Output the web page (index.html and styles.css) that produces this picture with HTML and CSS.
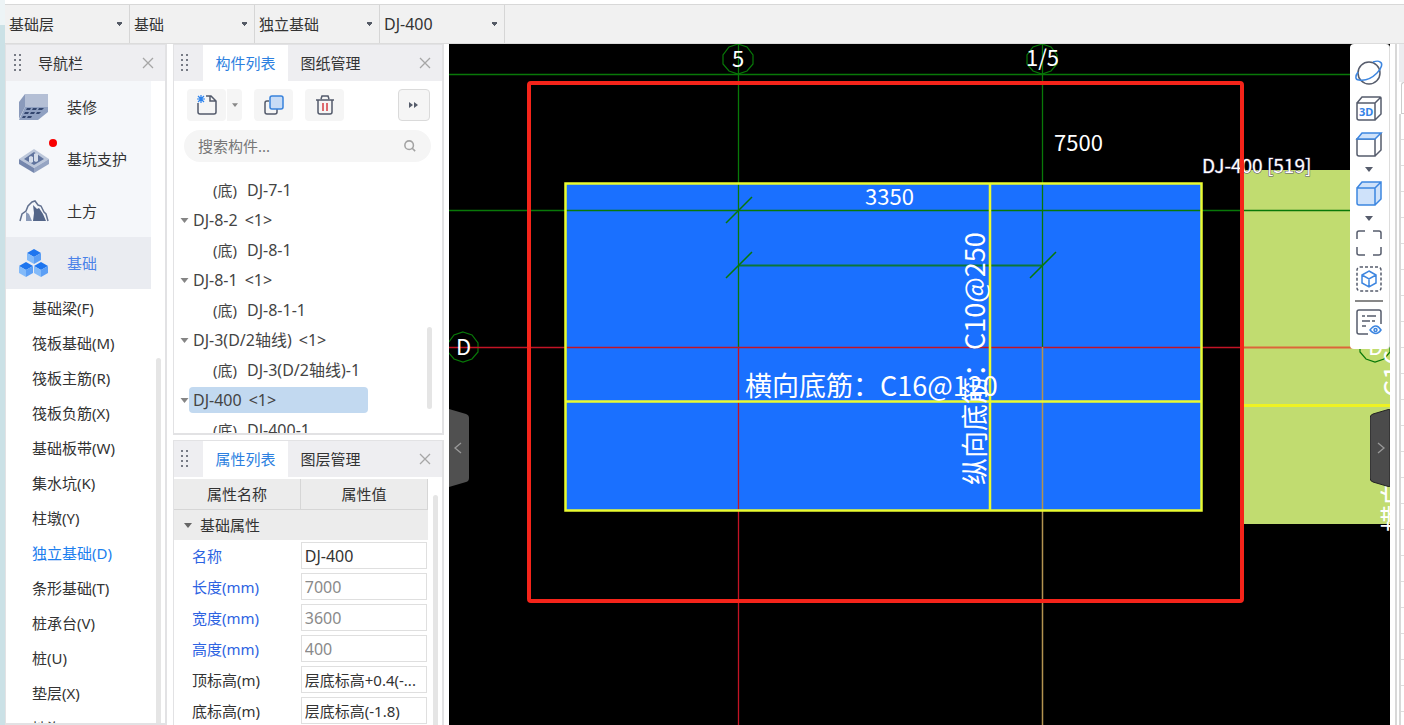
FILE: index.html
```html
<!DOCTYPE html>
<html lang="zh-CN">
<head>
<meta charset="utf-8">
<title>独立基础</title>
<link rel="stylesheet" href="styles.css">
</head>
<body>
<svg class="defs" aria-hidden="true">
  <symbol id="grip" viewBox="0 0 9 18"><path d="M0 0h2v2H0zM5 0h2v2H5zM0 5h2v2H0zM5 5h2v2H5zM0 10h2v2H0zM5 10h2v2H5zM0 15h2v2H0zM5 15h2v2H5z" fill="#777b85"/></symbol>
  <symbol id="close" viewBox="0 0 12 12"><path d="M1 1l10 10M11 1L1 11" stroke="#a6a6a6" stroke-width="1.3"/></symbol>
  <symbol id="down" viewBox="0 0 8 5"><path d="M0 0h8L4 5z" fill="currentColor"/></symbol>
</svg>
<div class="desktop"></div>
<div class="app">
  <header class="context">
    <select aria-label="楼层"><option>基础层</option></select>
    <select aria-label="构件类别"><option>基础</option></select>
    <select aria-label="构件类型"><option>独立基础</option></select>
    <select aria-label="构件" class="latin"><option>DJ-400</option></select>
  </header>
  <div class="work">
    <nav class="panel nav">
      <div class="head">
        <svg class="grip"><use href="#grip"/></svg><span class="title">导航栏</span>
        <button class="close" aria-label="关闭导航栏"><svg><use href="#close"/></svg></button>
      </div>
      <ul class="groups">
        <li><a href="#"><svg class="gicon" viewBox="0 0 30 28"><path d="M6 1h23v14H6z" fill="#b4bfd5"/><path d="M6 1v13L0 26V9z" fill="#8a9abb"/><path d="M6 14h23v5L19 27H0z" fill="#8fa0c1"/><path d="M8 15h4l-1 2H7zM14 15h4l-1 2h-4zM20 15h5l-2 2h-4zM6 19h4l-1 2H5zM12 19h4l-1 2h-4zM18 19h4l-2 2h-3zM4 23h3l-1 2H3zM9 23h4l-1 2H8z" fill="#33466f"/></svg>装修</a></li>
        <li><a href="#"><svg class="gicon" viewBox="0 0 30 28"><path d="M0 14L15 4l15 10-15 9z" fill="#bcc7da"/><path d="M0 14l15 9v5L0 19z" fill="#7587ad"/><path d="M30 14l-15 9v5l15-9z" fill="#96a5c3"/><path d="M5 14l10-7 10 7-10 6z" fill="#60749e"/><path d="M10 12l2-1 2 1v5l-2 1-2-1zM15 9l2-1 2 1v7l-2 1-2-1z" fill="#d4dce9"/></svg>基坑支护<i class="dot"></i></a></li>
        <li><a href="#"><svg class="gicon" viewBox="0 0 30 28"><path d="M1 24l2-7 4-3 2-5 4-4 3-1 3 4 3 1 3 6 2 2 2 7" fill="none" stroke="#62718f" stroke-width="1.5"/><path d="M14 8l4 4 2-1 4 6 3 7H14l1-8z" fill="#536588"/><path d="M7 15l3 2 3 7H7z" fill="#8a9ab8"/></svg>土方</a></li>
        <li class="active"><a href="#"><svg class="gicon" viewBox="0 0 30 28"><g id="cube"><path d="M15 0l7 4-7 4-7-4z" fill="#1e75ef"/><path d="M8 4l7 4v7l-7-4z" fill="#83baf9"/><path d="M22 4l-7 4v7l7-4z" fill="#5c9ff5"/></g><use href="#cube" x="-8" y="13"/><use href="#cube" x="7" y="13"/></svg>基础</a></li>
      </ul>
      <ul class="types">
        <li><a href="#">基础梁(F)</a></li><li><a href="#">筏板基础(M)</a></li><li><a href="#">筏板主筋(R)</a></li><li><a href="#">筏板负筋(X)</a></li><li><a href="#">基础板带(W)</a></li><li><a href="#">集水坑(K)</a></li><li><a href="#">柱墩(Y)</a></li><li class="active"><a href="#">独立基础(D)</a></li><li><a href="#">条形基础(T)</a></li><li><a href="#">桩承台(V)</a></li><li><a href="#">桩(U)</a></li><li><a href="#">垫层(X)</a></li><li><a href="#">地沟(G)</a></li>
      </ul>
      <i class="scroll nav-scroll"></i>
    </nav>
    <div class="side">
      <section class="panel list">
        <div class="head">
          <svg class="grip"><use href="#grip"/></svg>
          <button class="tab active">构件列表</button><button class="tab">图纸管理</button>
          <button class="close" aria-label="关闭构件列表"><svg><use href="#close"/></svg></button>
        </div>
        <div class="tools">
          <div class="split">
            <button class="tool" aria-label="新建"><svg width="22" height="22" viewBox="0 0 22 22" fill="none" stroke="#535a6b" stroke-width="1.5"><path d="M2 9v9q0 2 2 2h14q2 0 2-2V7l-5-5h-5M14 2v5h6"/><path d="M2 2l6 6M8 2L2 8M5 1v8M1 5h8" stroke="#2c83ee" stroke-width="1.2"/></svg></button>
            <button class="more" aria-label="新建选项"><svg class="caret"><use href="#down"/></svg></button>
          </div>
          <button class="tool" aria-label="复制"><svg width="22" height="22" viewBox="0 0 22 22" fill="none" stroke-width="1.5"><path d="M6 7H4Q2 7 2 9v9q0 2 2 2h8q2 0 2-2v-3" stroke="#535a6b"/><rect x="7" y="2" width="13" height="13" rx="2" fill="#c8dcf6" stroke="#3882dc"/></svg></button>
          <button class="tool" aria-label="删除"><svg width="22" height="22" viewBox="0 0 22 22" fill="none" stroke="#535a6b" stroke-width="1.5"><path d="M2 6h18M7 5l1-3h6l1 3M4 6v12q0 2 2 2h10q2 0 2-2V6"/><path d="M9 9v8M13 9v8" stroke="#d53d42"/></svg></button>
          <button class="expand" aria-label="更多工具"><svg width="10" height="8" viewBox="0 0 10 8"><path d="M0 1l4 3-4 3zM5 1l4 3-4 3z" fill="#555c6a"/></svg></button>
        </div>
        <div class="search">
          <input type="text" aria-label="搜索构件" placeholder="搜索构件...">
          <svg width="12" height="12" viewBox="0 0 14 14" fill="none" stroke="#a3a3a3" stroke-width="1.8"><circle cx="6" cy="6" r="5"/><path d="M9 9l4 4"/></svg>
        </div>
        <ul class="tree">
          <li class="leaf"><span>(底)</span>DJ-7-1</li>
          <li><svg class="caret"><use href="#down"/></svg><b>DJ-8-2</b><i>&lt;1&gt;</i></li>
          <li class="leaf"><span>(底)</span>DJ-8-1</li>
          <li><svg class="caret"><use href="#down"/></svg><b>DJ-8-1</b><i>&lt;1&gt;</i></li>
          <li class="leaf"><span>(底)</span>DJ-8-1-1</li>
          <li><svg class="caret"><use href="#down"/></svg><b>DJ-3(D/2轴线)</b><i>&lt;1&gt;</i></li>
          <li class="leaf"><span>(底)</span>DJ-3(D/2轴线)-1</li>
          <li><svg class="caret"><use href="#down"/></svg><div class="picked"><b>DJ-400</b><i>&lt;1&gt;</i></div></li>
          <li class="leaf"><span>(底)</span>DJ-400-1</li>
        </ul>
        <i class="scroll list-scroll"></i>
      </section>
      <section class="panel props">
        <div class="head">
          <svg class="grip"><use href="#grip"/></svg>
          <button class="tab active">属性列表</button><button class="tab">图层管理</button>
          <button class="close" aria-label="关闭属性列表"><svg><use href="#close"/></svg></button>
        </div>
        <table>
          <thead><tr><th>属性名称</th><th>属性值</th></tr></thead>
          <tbody>
            <tr class="group"><td colspan="2"><svg class="caret"><use href="#down"/></svg>基础属性</td></tr>
            <tr class="key"><td><label for="p1">名称</label></td><td><input id="p1" class="latin" value="DJ-400"></td></tr>
            <tr class="key dim"><td><label for="p2">长度(mm)</label></td><td><input id="p2" class="latin" value="7000"></td></tr>
            <tr class="key dim"><td><label for="p3">宽度(mm)</label></td><td><input id="p3" class="latin" value="3600"></td></tr>
            <tr class="key dim"><td><label for="p4">高度(mm)</label></td><td><input id="p4" class="latin" value="400"></td></tr>
            <tr><td><label for="p5">顶标高(m)</label></td><td><input id="p5" value="层底标高+0.4(-..."></td></tr>
            <tr><td><label for="p6">底标高(m)</label></td><td><input id="p6" value="层底标高(-1.8)"></td></tr>
          </tbody>
        </table>
        <i class="scroll props-scroll"></i>
      </section>
    </div>
    <main class="canvas">
      <svg class="drawing" viewBox="0 0 941 681" preserveAspectRatio="xMinYMin slice">
        <rect x="795" y="126" width="146" height="354" fill="#c1dc70"/>
        <rect x="117" y="140" width="636" height="326" fill="#1a70ff"/>
        <g fill="none" stroke="#087808">
          <path d="M0 30.500h941M0 166.500h941M289.500 0v303M593.500 0v303" stroke-width="1.3"/>
          <path d="M289 221.500h305" stroke-width="2" stroke-opacity=".8"/>
          <path d="M277 179l26-26M277 234l26-26M581 234l26-26" stroke-width="1.500"/>
          <path id="bubble" d="M289 0l9 3 6 8v9l-6 7-9 3-9-3-6-7v-9l6-8z" stroke-width="1.200"/>
          <use href="#bubble" x="304"/><use href="#bubble" x="-275" y="288"/><use href="#bubble" x="637" y="288"/>
        </g>
        <path d="M0 303.500h795" stroke="#c31425" stroke-width="1.500"/>
        <path d="M289.500 303v378" stroke="#c31425" stroke-width="1.300"/>
        <path d="M795 303.500h132" stroke="#e2482c" stroke-width="2" stroke-opacity=".8"/>
        <path d="M593.500 303v378" stroke="#b29350" stroke-width="1.500"/>
        <g fill="none" stroke="#eafb30" stroke-width="2.500"><rect x="116.500" y="139.500" width="636" height="327"/><path d="M541 140v326M117 357.500h636"/></g>
        <path d="M795 361.500h146" stroke="#eef222" stroke-width="3"/>
        <g class="t22">
          <text x="283" y="23">5</text><text x="577" y="22">1/5</text><text x="605" y="107">7500</text><text x="416" y="161">3350</text><text x="7" y="311">D</text><text x="919" y="311">D</text>
        </g>
        <text class="t19" x="753" y="129">DJ-400 [519]</text>
        <g class="t27">
          <text x="296" y="352">横向底筋：C16@120</text>
          <text transform="translate(536 441) rotate(-90)">纵向底筋：C10@250</text>
          <text transform="translate(955 488) rotate(-90)">横向底筋：C16@120</text>
        </g>
        <rect x="80" y="39" width="713" height="518" rx="2" fill="none" stroke="#f5241a" stroke-width="4"/>
      </svg>
      <button class="flap left" aria-label="收起左侧"><svg width="20" height="78" viewBox="0 0 20 78"><path d="M0 0l17 5q3 1 3 4v60q0 3-3 4L0 78z" fill="#505050"/><path d="M12 34l-6 5 6 5" fill="none" stroke="#9a9a9a" stroke-width="1.300"/></svg></button>
      <button class="flap right" aria-label="展开右侧"><svg width="20" height="78" viewBox="0 0 20 78"><path d="M20 0L3 5Q0 6 0 9v60q0 3 3 4l17 5z" fill="#4b4b4b" stroke="#222"/><path d="M8 34l6 5-6 5" fill="none" stroke="#9a9a9a" stroke-width="1.300"/></svg></button>
      <div class="views">
        <button aria-label="动态观察"><svg viewBox="0 0 28 28"><circle cx="14" cy="14" r="11"/><path class="b" d="M3 13c-3 4-3 8 1 8 6 1 13-2 18-7 5-5 6-10 3-11-1-1-4-1-7 0"/></svg></button>
        <button aria-label="三维"><svg viewBox="0 0 28 28"><path d="M2 8h18v17H4q-2 0-2-2zM2 8l5-6h18q1 0 1 1v16l-6 6M20 8l6-6"/><text x="4" y="21">3D</text></svg></button>
        <button aria-label="俯视"><svg viewBox="0 0 28 28"><path d="M2 8h18v17H4q-2 0-2-2zM26 2v17l-6 6"/><path class="b f" d="M2 8l5-6h19l-6 6z"/></svg></button>
        <button class="arrow" aria-label="更多视图"><svg class="caret"><use href="#down"/></svg></button>
        <button aria-label="实体显示"><svg viewBox="0 0 28 28"><path class="b f" d="M2 8h18v17H4q-2 0-2-2zM2 8l5-6h19v17l-6 6M20 8l6-6"/></svg></button>
        <button class="arrow" aria-label="更多显示方式"><svg class="caret"><use href="#down"/></svg></button>
        <button aria-label="全屏"><svg viewBox="0 0 28 28"><path d="M2 10V4q0-2 2-2h6M18 2h6q2 0 2 2v6M26 18v6q0 2-2 2h-6M10 26H4q-2 0-2-2v-6"/></svg></button>
        <button aria-label="局部三维"><svg viewBox="0 0 28 28"><rect x="2" y="2" width="24" height="24" rx="3" stroke-dasharray="3 2"/><path class="b" d="M14 6l7 4v8l-7 4-7-4v-8zM7 10l7 4 7-4M14 14v8"/></svg></button>
        <hr>
        <button aria-label="显示设置"><svg viewBox="0 0 28 28"><path d="M13 26H4q-2 0-2-2V4q0-2 2-2h20q2 0 2 2v12M7 8h3M12 8h9M7 13h8M17 13h3M7 18h4"/><path class="b" d="M15 22q6-8 11 0-5 7-11 0z"/><circle class="b" cx="20.500" cy="22" r="1.500"/></svg></button>
      </div>
    </main>
    <aside class="edge"><i class="edge-head"></i><i class="edge-tab"></i><i class="edge-rows"></i></aside>
  </div>
</div>
</body>
</html>
```
FILE: styles.css
```css
* { box-sizing: border-box; }
body { margin: 0; height: 100vh; display: flex; overflow: hidden; background: #fff; color: #333; font: 15px/20px "Noto Sans", "Noto Sans CJK SC", sans-serif; }
button, select, input { font: inherit; color: inherit; }
button { border: 0; padding: 0; background: none; display: flex; align-items: center; justify-content: center; }
ul { list-style: none; margin: 0; padding: 0; }
a { color: inherit; text-decoration: none; }
.defs { position: absolute; width: 0; height: 0; }
.desktop { width: 5px; flex: none; background: linear-gradient(#edf4f6 25px, #cbe1e6 25px); }
.app { flex: 1; min-width: 0; display: flex; flex-direction: column; padding-top: 4px; }
.context { height: 40px; flex: none; display: flex; background: #f1f1f1; border-top: 1px solid #d8d8d8; border-bottom: 1px solid #dcdcdc; }
.context select { appearance: none; width: 125px; border: 0; border-right: 1px solid #d6d6d6; border-radius: 0; padding: 0 4px; background: conic-gradient(from -39deg at 50% 100%, #555b66 78deg, transparent 0) right 6px center / 7px 4px no-repeat; }
.context .latin, input.latin { font-size: 16px; }
.work { flex: 1; min-height: 0; display: flex; }
.panel { position: relative; border: 2px solid #e2e2e4; border-width: 1px 2px 2px 1px; background: #fff; overflow: hidden; }
.head { display: flex; align-items: stretch; height: 36px; background: #eeeef1; flex: none; }
.grip { width: 9px; height: 18px; margin: 9px 10px 0 7px; flex: none; }
.close { margin-left: auto; width: 34px; }
.close svg { width: 12px; height: 12px; }
.title { padding: 8px 0 0 5px; }
.nav { width: 162px; flex: none; margin-right: 6px; }
.nav .grip { margin-left: 8px; }
.groups { margin-right: 14px; background: #f5f7fa; }
.groups a { position: relative; display: flex; align-items: center; height: 52px; gap: 18px; padding-left: 13px; }
.groups .active { background: #eaecf1; color: #4b82e8; }
.gicon { width: 30px; height: 28px; overflow: visible; }
.dot { position: absolute; left: 43px; top: 6px; width: 8px; height: 8px; border-radius: 50%; background: #f80000; }
.types { padding-top: 2px; }
.types a { display: block; line-height: 35px; padding-left: 26px; }
.types .active { color: #1c7eee; }
.scroll { position: absolute; width: 5px; border-radius: 3px; background: #e5e5e5; }
.nav-scroll { right: 4px; top: 313px; bottom: -4px; }
.side { width: 271px; flex: none; display: flex; flex-direction: column; gap: 5px; margin-right: 5px; }
.list { flex: none; height: 391px; }
.props { flex: 1; border-bottom: 0; }
.side .tab { width: 85px; }
.side .grip { margin-right: 13px; }
.tab.active { background: #fff; color: #2c7fe0; }
.tools { display: flex; gap: 12px; padding: 8px 12px 8px 13px; height: 49px; }
.split { display: flex; gap: 1px; }
.tool { width: 39px; height: 32px; border-radius: 4px; background: #f5f5f5; }
.more { width: 15px; height: 32px; border-radius: 0 4px 4px 0; background: #f5f5f5; color: #888; }
.more .caret { width: 6px; height: 4px; }
.expand { width: 32px; height: 32px; margin-left: auto; border: 1px solid #dadada; border-radius: 4px; background: #f5f5f5; }
.caret { width: 8px; height: 5px; flex: none; }
.search { height: 32px; margin: 0 11px 13px 10px; border-radius: 16px; background: #f5f5f5; display: flex; align-items: center; padding: 0 15px 0 14px; }
.search input { flex: 1; min-width: 0; border: 0; padding: 0; background: none; outline: 0; }
.search input::placeholder { color: #777; }
.tree { font-size: 16px; color: #444; }
.tree li { display: flex; align-items: center; height: 30px; padding-left: 6px; }
.tree .leaf { padding-left: 39px; gap: 10px; }
.tree span { font-size: 15px; }
.tree .caret { color: #858585; width: 9px; }
.tree b { font-weight: 400; line-height: 26px; padding-left: 4px; }
.tree i { font-style: normal; margin-left: 7px; }
.tree .picked { display: flex; align-items: center; width: 179px; border-radius: 4px; background: #c2d9f0; }
.list-scroll { right: 10px; top: 282px; height: 82px; }
.props-scroll { right: 4px; top: 54px; bottom: -4px; }
table { width: 254px; margin-top: 2px; border-collapse: collapse; table-layout: fixed; }
th { height: 30px; padding: 0; font-weight: 400; background: #ececec; border-right: 1px solid #d6d6d6; border-bottom: 1px solid #d6d6d6; }
td { height: 31px; padding: 0 0 0 18px; }
td + td { padding: 0; }
.group td { padding-left: 10px; background: #ececec; }
.group .caret { margin-right: 8px; vertical-align: 3px; color: #666; }
td input { display: block; width: 126px; height: 27px; border: 1px solid #dfdfdf; padding: 0 3px; outline: 0; text-overflow: ellipsis; }
.key label { color: #2d63e2; }
.dim input { color: #8a8a8a; }
.canvas { position: relative; flex: 1; min-width: 0; overflow: hidden; background: #000; }
.drawing { position: absolute; inset: 0; width: 100%; height: 100%; font-family: "Noto Sans CJK SC", sans-serif; fill: #fff; }
.t22 { font-size: 22px; }
.t19 { font-size: 19px; stroke: #5a5070; stroke-width: 1px; paint-order: stroke; }
.t27 { font-size: 27px; }
.flap { position: absolute; top: 365px; }
.flap.left { left: 0; }
.flap.right { right: 0; }
.views { position: absolute; top: 0; right: 0; width: 40px; padding: 11px 1px 9px 0; border-radius: 4px; background: #fff; border-right: 1px solid #ddd; display: flex; flex-direction: column; align-items: center; }
.views button { height: 36px; }
.views button > svg { width: 28px; height: 28px; fill: none; stroke: #565c6c; stroke-width: 1.5; overflow: visible; }
.views .arrow { height: 13px; color: #565c6c; }
.views .arrow svg { width: 8px; height: 5px; stroke: none; }
.views .b { stroke: #3d86e0; }
.views .f { fill: #cfe2fa; }
.views text { font: 700 11px "Noto Sans", sans-serif; fill: #3683e6; stroke: none; }
.views hr { width: 28px; margin: 3px 0 2px; border: 0; border-top: 2px solid #888; }
.edge { width: 9px; margin-left: 5px; flex: none; display: flex; flex-direction: column; border-left: 2px solid #d8d8d8; background: #fff; }
.edge-head { height: 38px; margin-left: 2px; background: #ececef; }
.edge-tab { height: 32px; margin-left: 4px; border: 1px solid #ccc; border-right: 0; border-radius: 5px 0 0 0; }
.edge-rows { flex: 1; margin-left: 2px; border-left: 2px solid #d8d8d8; background: repeating-linear-gradient(#fff 0 25px, #ddd 25px 26px); }
```
